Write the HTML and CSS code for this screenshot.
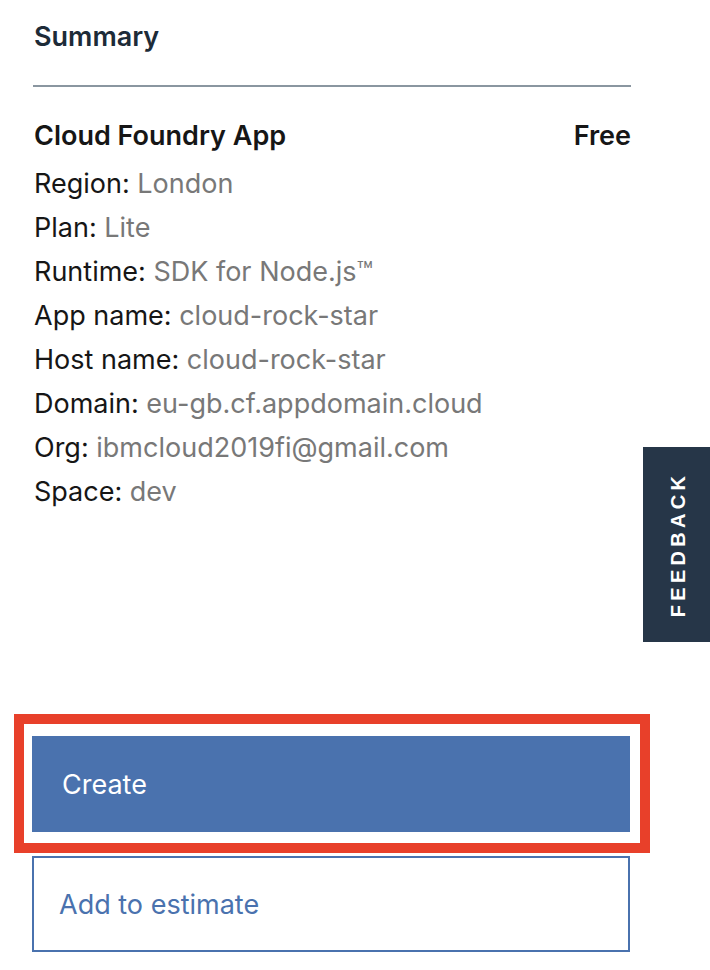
FILE: index.html
```html
<!DOCTYPE html>
<html lang="en">
<head>
<meta charset="utf-8">
<title>Summary</title>
<link rel="stylesheet" href="styles.css">
</head>
<body>
<main class="page">
  <section class="summary">
    <h2 class="title">Summary</h2>
    <div class="rule"></div>
    <div class="item-head">
      <span>Cloud Foundry App</span>
      <span>Free</span>
    </div>
    <ul class="details">
      <li><span class="label">Region:</span> <span class="value">London</span></li>
      <li><span class="label">Plan:</span> <span class="value">Lite</span></li>
      <li><span class="label">Runtime:</span> <span class="value">SDK for Node.js™</span></li>
      <li><span class="label">App name:</span> <span class="value">cloud-rock-star</span></li>
      <li><span class="label">Host name:</span> <span class="value">cloud-rock-star</span></li>
      <li><span class="label">Domain:</span> <span class="value">eu-gb.cf.appdomain.cloud</span></li>
      <li><span class="label">Org:</span> <span class="value">ibmcloud2019fi@gmail.com</span></li>
      <li><span class="label">Space:</span> <span class="value">dev</span></li>
    </ul>
  </section>
  <div class="actions">
    <div class="highlight">
      <button class="btn btn-primary">Create</button>
    </div>
    <button class="btn btn-secondary">Add to estimate</button>
  </div>
</main>
<button class="feedback"><span class="feedback-text">FEEDBACK</span></button>
</body>
</html>
```

FILE: styles.css
```css
* { box-sizing: border-box; }

html, body {
  margin: 0;
  padding: 0;
  background: #ffffff;
}

body {
  font-family: Inter, "Noto Sans", Roboto, sans-serif;
  color: #161616;
  width: 710px;
  height: 970px;
  overflow: hidden;
  position: relative;
}

.page {
  display: flex;
  flex-direction: column;
  padding: 22px 0 0 32px;
  width: 631px;
}

.summary {
  display: flex;
  flex-direction: column;
  padding-left: 1px;
}

.title {
  margin: 0 0 0 1px;
  font-size: 27px;
  line-height: 30px;
  font-weight: 600;
  color: #1d2b38;
}

.rule {
  height: 2px;
  background: #8a96a0;
  margin-top: 33px;
}

.item-head {
  display: flex;
  justify-content: space-between;
  margin-top: 27px;
  padding-left: 1px;
  font-size: 27px;
  line-height: 44px;
  font-weight: 600;
  color: #161616;
}

.details {
  list-style: none;
  margin: 4px 0 0 0;
  padding: 0 0 0 1px;
  font-size: 27px;
  line-height: 44px;
}

.label { color: #161616; }
.value { color: #787878; }

.actions {
  display: flex;
  flex-direction: column;
  gap: 24px;
  margin-top: 222px;
}

.highlight {
  position: relative;
}

.highlight::after {
  content: "";
  position: absolute;
  top: -22px;
  left: -18px;
  right: -19px;
  bottom: -21px;
  border: 10px solid #e8402a;
  pointer-events: none;
}

.btn {
  display: flex;
  align-items: center;
  width: 598px;
  height: 96px;
  margin: 0;
  font-family: inherit;
  font-size: 27px;
  text-align: left;
  cursor: pointer;
}

.btn-primary {
  background: #4a72ae;
  color: #ffffff;
  border: none;
  padding: 0 0 0 30px;
}

.btn-secondary {
  background: #ffffff;
  color: #4a72ae;
  border: 2px solid #4a72ae;
  padding: 0 0 0 25px;
}

.feedback {
  position: absolute;
  top: 447px;
  right: 0;
  width: 67px;
  height: 195px;
  background: #263648;
  border: none;
  padding: 0 0 0 4px;
  display: flex;
  align-items: center;
  justify-content: center;
}

.feedback-text {
  display: block;
  transform: rotate(-90deg);
  white-space: nowrap;
  color: #ffffff;
  font-family: inherit;
  font-size: 20px;
  font-weight: 700;
  letter-spacing: 4.3px;
}
```
